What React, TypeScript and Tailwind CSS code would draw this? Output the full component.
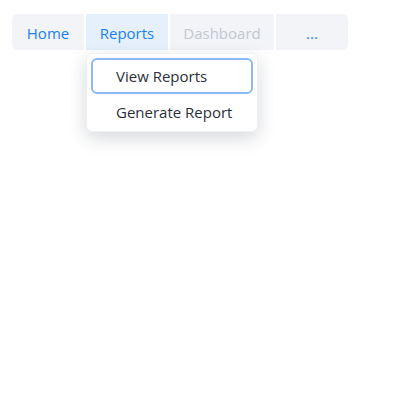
const tabs = [
  { label: 'Home', w: 'w-[72px]', cls: 'text-[#1a80f0] bg-[#f2f4f8] rounded-l-md' },
  { label: 'Reports', w: 'w-[82px]', cls: 'text-[#1a80f0] bg-[#e6f0fc]' },
  { label: 'Dashboard', w: 'w-[104px]', cls: 'text-[#c3c7cf] bg-[#f2f4f8]' },
  { label: '...', w: 'w-[72px]', cls: 'text-[#1a80f0] bg-[#f2f4f8] rounded-r-md' },
]

export default function App() {
  return (
    <div className="w-[420px] h-[420px] bg-white p-3 pt-[14px]" style={{ fontFamily: '"Open Sans", "Noto Sans", sans-serif' }}>
      <div className="relative">
        <nav className="flex gap-[2px]">
          {tabs.map((t) => (
            <div key={t.label} className={`${t.w} ${t.cls} h-9 pt-[2px] flex items-center justify-center text-[15px]`}>
              {t.label}
            </div>
          ))}
        </nav>
        <div className="absolute left-[74px] top-[39px] w-[172px] bg-white rounded-md px-1 pt-[4px] pb-[3px] shadow-[0_6px_18px_rgba(30,40,60,0.18)] border border-[#f0f1f4]">
          <div className="h-[36px] pt-[1px] flex items-center pl-[23px] border-2 border-[#8ab8f8] rounded-md text-[15px] text-[#2a2f3a]">
            View Reports
          </div>
          <div className="h-[34px] pt-[2px] flex items-center pl-[25px] text-[15px] text-[#2a2f3a]">
            Generate Report
          </div>
        </div>
      </div>
    </div>
  )
}
